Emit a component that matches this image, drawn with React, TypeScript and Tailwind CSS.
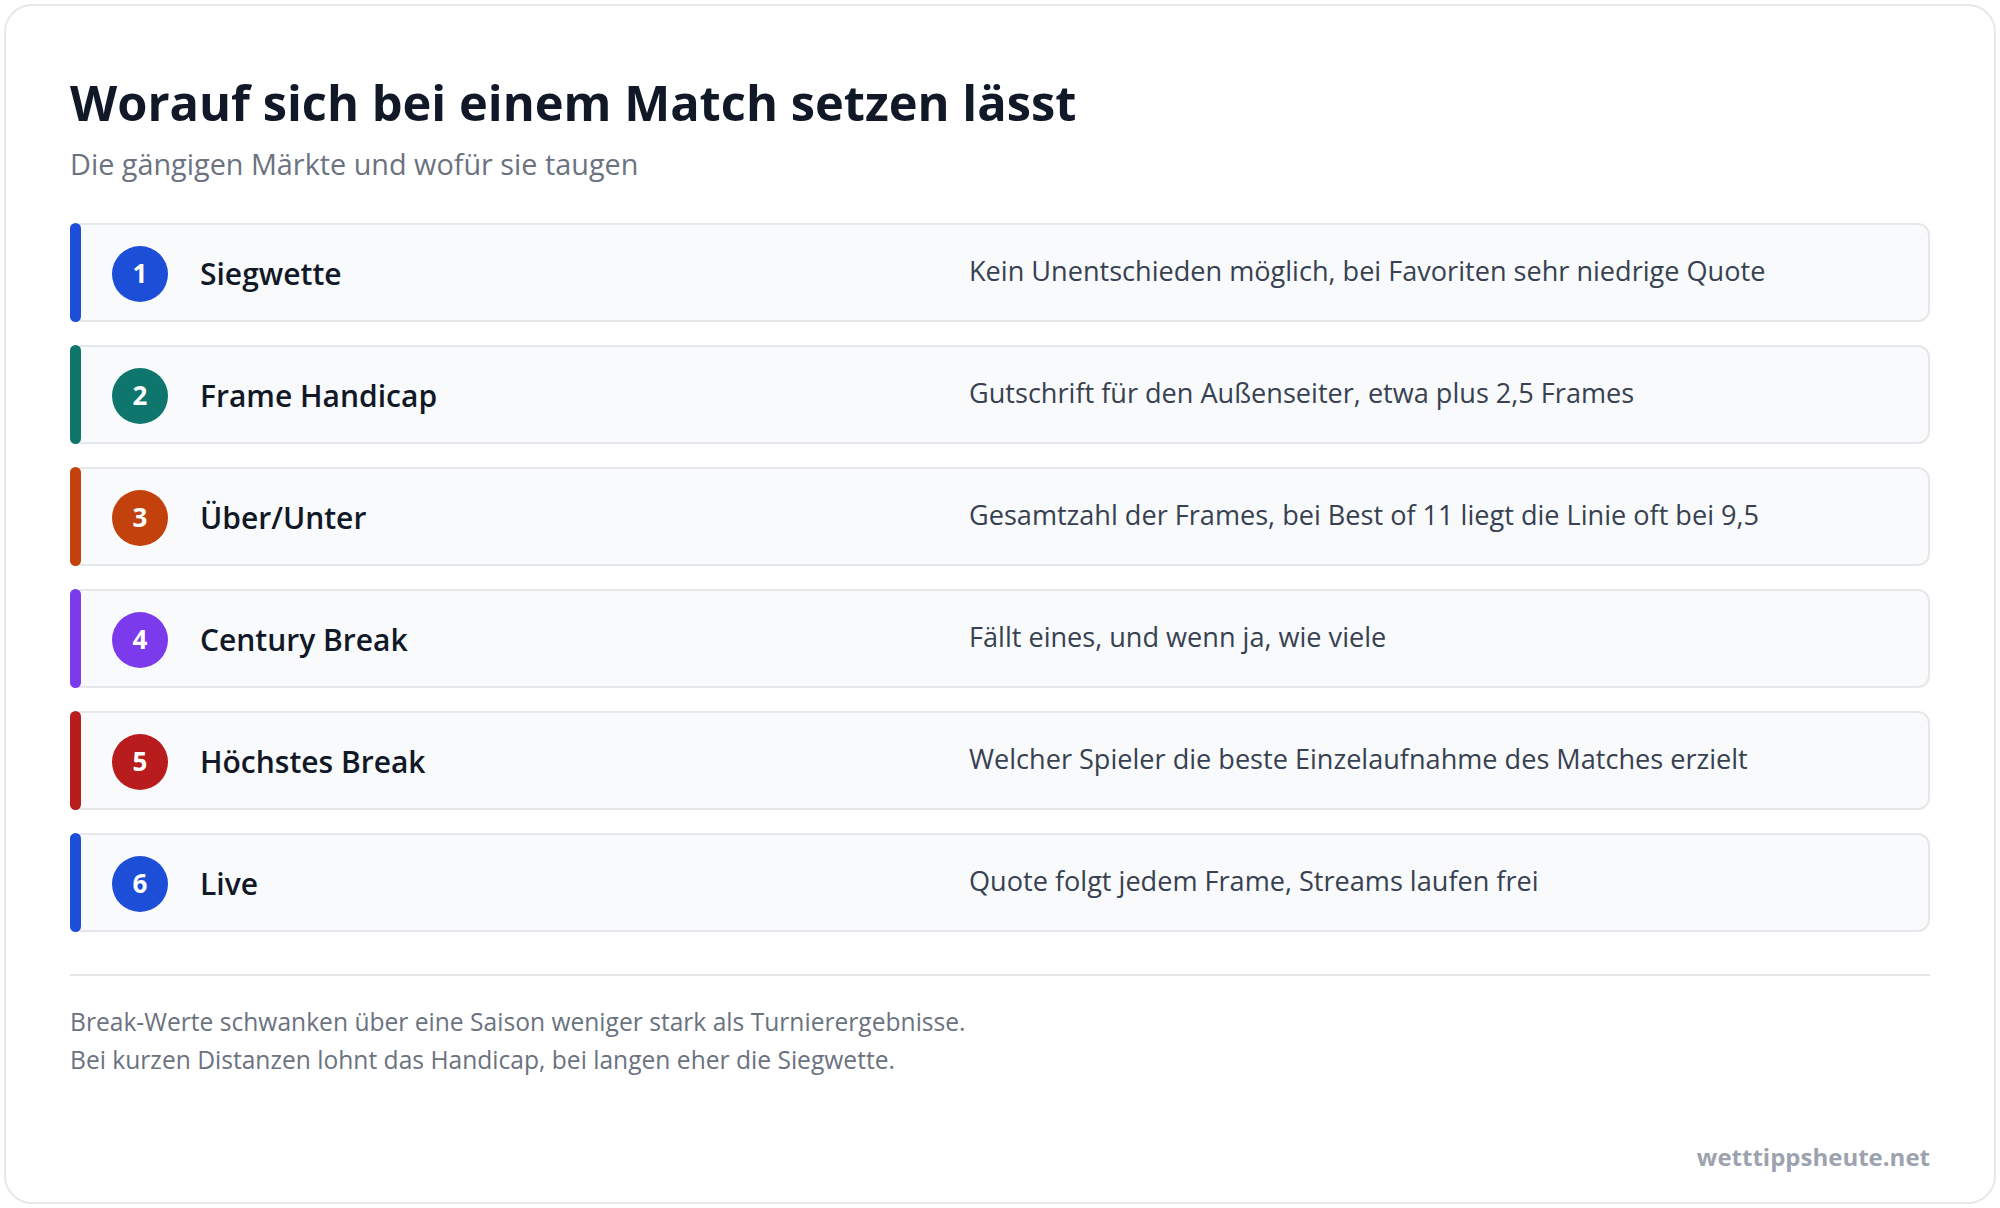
import React from "react";

type Row = { n: number; label: string; desc: string; bar: string; dot: string };

const rows: Row[] = [
  { n: 1, label: "Siegwette", desc: "Kein Unentschieden möglich, bei Favoriten sehr niedrige Quote", bar: "bg-[#1d4ed8]", dot: "bg-[#1d4ed8]" },
  { n: 2, label: "Frame Handicap", desc: "Gutschrift für den Außenseiter, etwa plus 2,5 Frames", bar: "bg-[#0f766e]", dot: "bg-[#0f766e]" },
  { n: 3, label: "Über/Unter", desc: "Gesamtzahl der Frames, bei Best of 11 liegt die Linie oft bei 9,5", bar: "bg-[#c2410c]", dot: "bg-[#c2410c]" },
  { n: 4, label: "Century Break", desc: "Fällt eines, und wenn ja, wie viele", bar: "bg-[#7c3aed]", dot: "bg-[#7c3aed]" },
  { n: 5, label: "Höchstes Break", desc: "Welcher Spieler die beste Einzelaufnahme des Matches erzielt", bar: "bg-[#b91c1c]", dot: "bg-[#b91c1c]" },
  { n: 6, label: "Live", desc: "Quote folgt jedem Frame, Streams laufen frei", bar: "bg-[#1d4ed8]", dot: "bg-[#1d4ed8]" },
];

export default function App() {
  return (
    <div className="h-[1208px] w-full bg-white p-1 font-['Open_Sans',_'Noto_Sans',_sans-serif]">
      <div className="flex h-full flex-col rounded-[28px] border-2 border-[#e5e7eb] bg-white px-16 pt-[66px] pb-[29px]">
        <h1 className="text-[48.8px] font-bold leading-[60px] text-[#111827]">
          Worauf sich bei einem Match setzen lässt
        </h1>
        <p className="mt-[14px] text-[28.8px] leading-[36px] text-[#6b7280]">
          Die gängigen Märkte und wofür sie taugen
        </p>
        <div className="mt-[41px] flex flex-col gap-[23px]">
          {rows.map((r) => (
            <div
              key={r.n}
              className="relative flex h-[99px] items-center rounded-xl border-2 border-[#e5e7eb] bg-[#f9fafb] pl-10 pr-8"
            >
              <div className={`absolute -left-[2px] -top-[2px] -bottom-[2px] w-[11px] rounded-full ${r.bar}`} />
              <div className="flex w-[857px] shrink-0 items-center gap-8 pt-[2px]">
                <div
                  className={`flex h-14 w-14 shrink-0 items-center justify-center rounded-full text-[26px] font-bold text-white ${r.dot}`}
                >
                  {r.n}
                </div>
                <span className="text-[30px] font-semibold text-[#111827]">{r.label}</span>
              </div>
              <span className="pb-[3px] text-[27.1px] text-[#374151]">{r.desc}</span>
            </div>
          ))}
        </div>
        <div className="mt-[42px] h-[2px] bg-[#e5e7eb]" />
        <div className="mt-[27px] text-[24.6px] leading-[38px] text-[#6b7280]">
          <p>Break-Werte schwanken über eine Saison weniger stark als Turnierergebnisse.</p>
          <p>Bei kurzen Distanzen lohnt das Handicap, bei langen eher die Siegwette.</p>
        </div>
        <div className="mt-auto text-right text-[24px] font-bold leading-[32px] text-[#9ca3af]">
          wetttippsheute.net
        </div>
      </div>
    </div>
  );
}
